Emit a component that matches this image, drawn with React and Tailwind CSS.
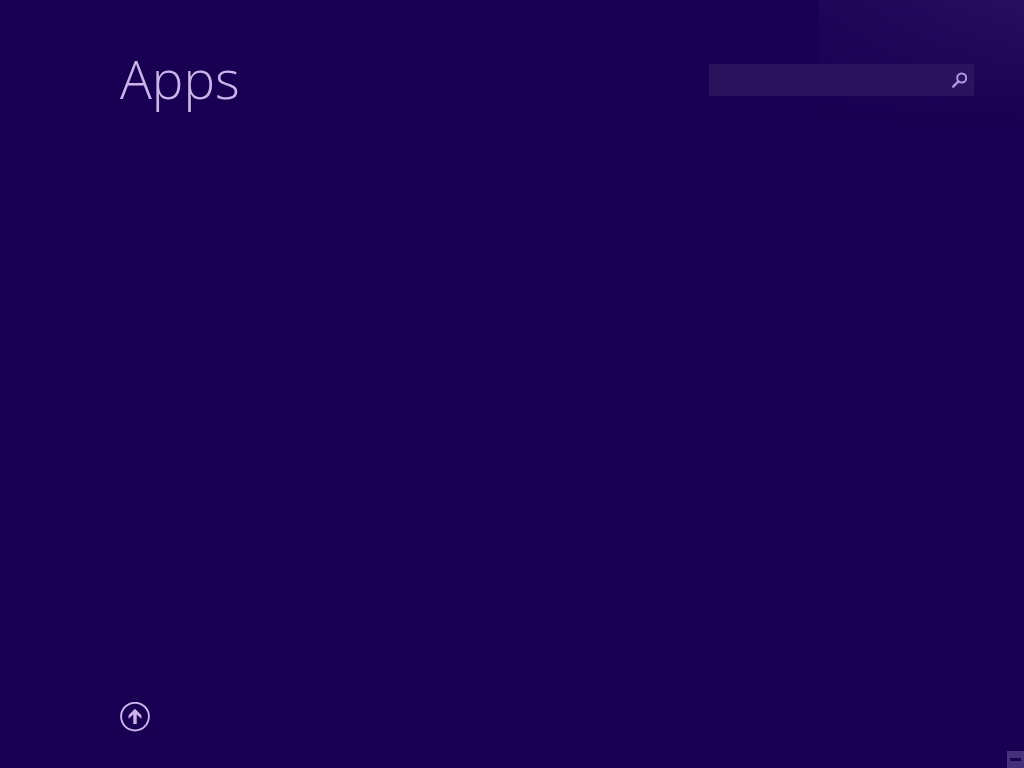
import React, { useState } from "react"

function SearchIcon() {
  return (
    <svg viewBox="0 0 16 16" className="h-4 w-4" fill="none" stroke="currentColor" aria-hidden="true">
      <circle cx="10.7" cy="6" r="4.5" strokeWidth="2" />
      <path d="M7.4 9.4L2.2 14.6" strokeWidth="2.4" strokeLinecap="round" />
    </svg>
  )
}

function UpArrowIcon() {
  return (
    <svg viewBox="0 0 30 30" className="h-[30px] w-[30px]" aria-hidden="true">
      <circle cx="15" cy="14.6" r="13.9" fill="none" stroke="currentColor" strokeWidth="1.9" />
      <path d="M15 6.8L21.4 13.2V16.8L16.7 12.4V22H13.3V12.4L8.6 16.8V13.2Z" fill="currentColor" />
    </svg>
  )
}

export default function AppsScreen() {
  const [query, setQuery] = useState("")

  return (
    <div className="relative flex min-h-screen flex-col bg-[#190052] font-['Open_Sans','Noto_Sans',sans-serif] text-[#cdb3ea]">
      {/* soft light in the wallpaper corner */}
      <div className="pointer-events-none absolute top-0 right-0 h-32 w-1/5 bg-[linear-gradient(to_bottom,transparent,#190052),linear-gradient(to_right,#1e0558,#290e60)]" />

      <header className="relative flex items-start justify-between pt-11 pr-[50px] pl-30">
        <h1 className="text-[53px] leading-[70px] font-light">Apps</h1>
        <form
          role="search"
          onSubmit={(e) => e.preventDefault()}
          className="mt-5 flex h-8 w-[265px] items-center bg-[#2c135e]"
        >
          <input
            type="text"
            aria-label="Search apps"
            value={query}
            onChange={(e) => setQuery(e.target.value)}
            className="h-full min-w-0 flex-1 bg-transparent px-2 text-sm outline-none"
          />
          <button type="submit" aria-label="Search" className="flex h-8 w-[30px] items-center justify-center text-[#b896e3]">
            <SearchIcon />
          </button>
        </form>
      </header>

      <main className="flex-1" />

      <footer className="flex items-end justify-between pl-30">
        <button type="button" aria-label="Back to Start" className="mb-9 rounded-full">
          <UpArrowIcon />
        </button>
        <button
          type="button"
          aria-label="Zoom out"
          className="flex h-[17px] w-[17px] items-center justify-center bg-[#45307a]"
        >
          <span className="h-[3px] w-[11px] bg-[#190052]" />
        </button>
      </footer>
    </div>
  )
}
